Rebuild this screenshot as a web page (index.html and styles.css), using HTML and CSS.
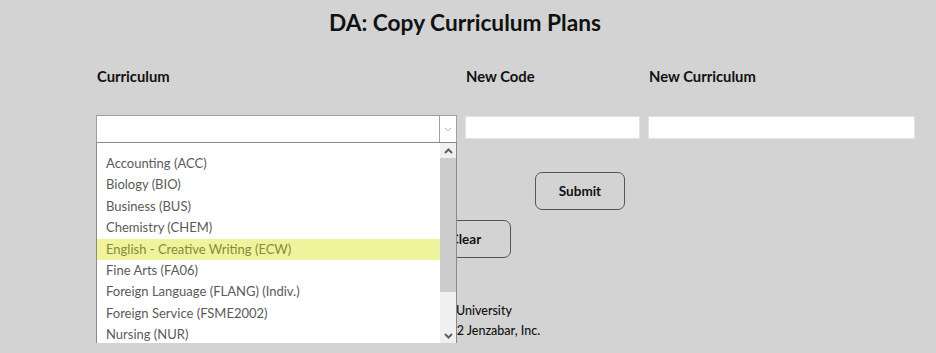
FILE: index.html
```html
<!DOCTYPE html>
<html lang="en">
<head>
  <meta charset="UTF-8" />
  <title>DA: Copy Curriculum Plans</title>
  <link rel="stylesheet" href="styles.css">
</head>
<body>
  <h1>DA: Copy Curriculum Plans</h1>

  <div class="form-grid">
    <label class="lbl">Curriculum</label>
    <label class="lbl">New Code</label>
    <label class="lbl">New Curriculum</label>

    <div class="select-wrap">
      <div class="select-box">
        <span class="select-value"></span>
        <span class="select-arrow">
          <svg width="8" height="5" viewBox="0 0 8 5"><path d="M1 1 L4 4 L7 1" fill="none" stroke="#b5b5b5" stroke-width="1"/></svg>
        </span>
      </div>
      <div class="dropdown">
        <ul class="options">
          <li></li>
          <li>Accounting (ACC)</li>
          <li>Biology (BIO)</li>
          <li>Business (BUS)</li>
          <li>Chemistry (CHEM)</li>
          <li class="hover">English - Creative Writing (ECW)</li>
          <li>Fine Arts (FA06)</li>
          <li>Foreign Language (FLANG) (Indiv.)</li>
          <li>Foreign Service (FSME2002)</li>
          <li>Nursing (NUR)</li>
        </ul>
        <div class="scrollbar">
          <div class="sb-btn">
            <svg width="9" height="6" viewBox="0 0 9 6"><path d="M1 5 L4.5 1.5 L8 5" fill="none" stroke="#606060" stroke-width="2"/></svg>
          </div>
          <div class="sb-thumb"></div>
          <div class="sb-track"></div>
          <div class="sb-btn">
            <svg width="9" height="6" viewBox="0 0 9 6"><path d="M1 1 L4.5 4.5 L8 1" fill="none" stroke="#606060" stroke-width="2"/></svg>
          </div>
        </div>
      </div>
    </div>
    <input class="txt" type="text">
    <input class="txt" type="text">
  </div>

  <div class="actions">
    <button class="btn btn-submit">Submit</button>
    <button class="btn btn-clear">Clear</button>
  </div>

  <div class="footer">
    <div class="foot-line l1">Jenzabar Demo States University</div>
    <div class="foot-line l2">Copyright &copy; 2022 Jenzabar, Inc.</div>
  </div>
</body>
</html>
```

FILE: styles.css
```css
body {
  margin: 0;
  background-color: #d3d3d3;
  font-family: 'Lato', 'DejaVu Sans', sans-serif;
  color: #111;
}
h1 {
  text-align: center;
  font-size: 22.7px;
  font-weight: bold;
  margin: 0;
  padding: 9px 6px 0 0;
  height: 31px;
}
.form-grid {
  display: grid;
  grid-template-columns: 361px 175px 267px;
  column-gap: 8px;
  margin-left: 96px;
  margin-top: 27px;
  grid-template-rows: 48px 28px;
}
.lbl {
  font-size: 14.8px;
  font-weight: bold;
  padding-left: 1px;
}
.select-wrap {
  position: relative;
  align-self: start;
}
.select-box {
  height: 26px;
  background: #fff;
  border: 1px solid #a0a0a0;
  display: flex;
}
.select-value {
  flex: 1;
}
.select-arrow {
  width: 16px;
  border-left: 1px solid #a0a0a0;
  display: flex;
  align-items: center;
  justify-content: center;
}
.txt {
  height: 23px;
  margin: 1px 0 0;
  padding: 0;
  border: 1px solid #e2e2e2;
  background: #fff;
  box-sizing: border-box;
}
.dropdown {
  position: absolute;
  top: 27px;
  left: 0;
  width: 359px;
  height: 200px;
  background: #fff;
  border: 1px solid #8a8a8a;
  display: flex;
  z-index: 10;
}
.options {
  list-style: none;
  margin: 0;
  padding: 0;
  flex: 1;
}
.options li {
  height: 21.4px;
  line-height: 21px;
  font-size: 13px;
  color: #5a5a5a;
  padding-left: 9px;
}
.options li:first-child {
  height: 10px;
}
.options li.hover {
  background: #eef39c;
  color: #878a3e;
}
.scrollbar {
  width: 16px;
  display: flex;
  flex-direction: column;
  background: #f0f0f0;
}
.sb-btn {
  height: 15px;
  display: flex;
  align-items: center;
  justify-content: center;
}
.sb-thumb {
  height: 134px;
  background: #cdcdcd;
}
.sb-track {
  flex: 1;
}
.actions {
  display: flex;
  flex-direction: column;
  margin-top: 29px;
}
.btn {
  font-family: 'Lato', 'DejaVu Sans', sans-serif;
  font-size: 13.5px;
  font-weight: bold;
  color: #111;
  background: transparent;
  border: 1px solid #555;
  border-radius: 7px;
  height: 38px;
}
.btn-submit {
  width: 90px;
  margin-left: 535px;
}
.btn-clear {
  width: 91px;
  margin-left: 420px;
  margin-top: 10px;
}
.footer {
  margin-top: 45px;
  font-size: 12.5px;
  font-weight: 500;
}
.foot-line {
  height: 20px;
}
.l1 {
  margin-left: 331px;
}
.l2 {
  margin-left: 364px;
}
```
